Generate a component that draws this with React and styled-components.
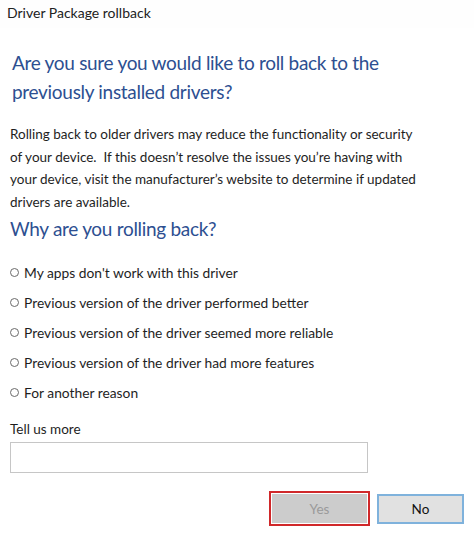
import styled, { createGlobalStyle } from "styled-components";

const GlobalStyle = createGlobalStyle`
  html, body {
    margin: 0;
    padding: 0;
    background: #ffffff;
  }
  body {
    font-family: "Segoe UI", "Lato", "Noto Sans", sans-serif;
    color: #1a1a1a;
  }
`;

const reasons = [
  "My apps don't work with this driver",
  "Previous version of the driver performed better",
  "Previous version of the driver seemed more reliable",
  "Previous version of the driver had more features",
  "For another reason",
];

const App = () => {
  return (
    <Wrapper>
      <GlobalStyle />
      <TitleBar>Driver Package rollback</TitleBar>
      <Body>
        <Content>
          <Heading>
            Are you sure you would like to roll back to the
            <br />
            previously installed drivers?
          </Heading>
          <Text>
            Rolling back to older drivers may reduce the functionality or security
            <br />
            of your device.&nbsp; If this doesn’t resolve the issues you’re having with
            <br />
            your device, visit the manufacturer’s website to determine if updated
            <br />
            drivers are available.
          </Text>
          <SubHeading>Why are you rolling back?</SubHeading>
          <Options>
            {reasons.map((r) => (
              <Option key={r}>
                <Radio />
                <span>{r}</span>
              </Option>
            ))}
          </Options>
          <Label>Tell us more</Label>
          <Input />
          <Buttons>
            <Button $focused $disabled>Yes</Button>
            <Button $primary>No</Button>
          </Buttons>
        </Content>
        <Strip />
      </Body>
    </Wrapper>
  );
};

const Wrapper = styled.div`
  width: 474px;
  height: 534px;
  background: #fff;
  overflow: hidden;
  display: flex;
  flex-direction: column;
`;

const TitleBar = styled.div`
  height: 28px;
  padding: 4px 0 0 7px;
  box-sizing: border-box;
  font-size: 14px;
  color: #222;
  background: #fefefe;
`;

const Body = styled.div`
  flex: 1;
  display: flex;
`;

const Content = styled.div`
  flex: 1;
  padding: 20px 0 0 10px;
  display: flex;
  flex-direction: column;
`;

const Strip = styled.div`
  width: 8px;
  margin: 4px 10px 0 0;
  background: #f9f9fc;
`;

const Heading = styled.h1`
  margin: 0 0 17px 2px;
  font-size: 19px;
  font-weight: 400;
  letter-spacing: -0.3px;
  white-space: nowrap;
  line-height: 29px;
  color: #2d4f91;
`;

const Text = styled.p`
  margin: 0;
  font-size: 13.5px;
  line-height: 22.5px;
  white-space: nowrap;
  color: #1e1e1e;
`;

const SubHeading = styled.h2`
  margin: 2px 0 19px;
  font-size: 19px;
  font-weight: 400;
  letter-spacing: -0.3px;
  line-height: 28px;
  color: #2d4f91;
`;

const Options = styled.div`
  display: flex;
  flex-direction: column;
  gap: 10px;
`;

const Option = styled.label`
  display: flex;
  align-items: center;
  gap: 5px;
  height: 20px;
  font-size: 13.8px;
  color: #1e1e1e;
`;

const Radio = styled.span`
  width: 7px;
  height: 7px;
  border: 1px solid #6a6a6a;
  border-radius: 50%;
  flex-shrink: 0;
`;

const Label = styled.div`
  margin-top: 17px;
  font-size: 13.5px;
  line-height: 20px;
  color: #1e1e1e;
`;

const Input = styled.div`
  margin-top: 3px;
  width: 358px;
  height: 31px;
  box-sizing: border-box;
  border: 1px solid #c6c6c6;
  background: #fff;
`;

const Button = styled.div`
  box-sizing: border-box;
  display: flex;
  align-items: center;
  justify-content: center;
  font-size: 13.5px;
  width: ${({ $focused }) => ($focused ? "101px" : "87px")};
  height: ${({ $focused }) => ($focused ? "35px" : "30px")};
  background: ${({ $disabled }) => ($disabled ? "#cccccc" : "#e1e1e1")};
  color: ${({ $disabled }) => ($disabled ? "#9a9a9a" : "#111")};
  border: ${({ $focused }) => ($focused ? "2px solid #d0282a" : "2px solid #7fb2dc")};
  box-shadow: ${({ $focused }) => ($focused ? "inset 0 0 0 1px #fff" : "none")};
`;

const Buttons = styled.div`
  margin-top: 18px;
  display: flex;
  align-items: center;
  justify-content: flex-end;
  gap: 7px;
  width: 454px;
`;

export default App;
